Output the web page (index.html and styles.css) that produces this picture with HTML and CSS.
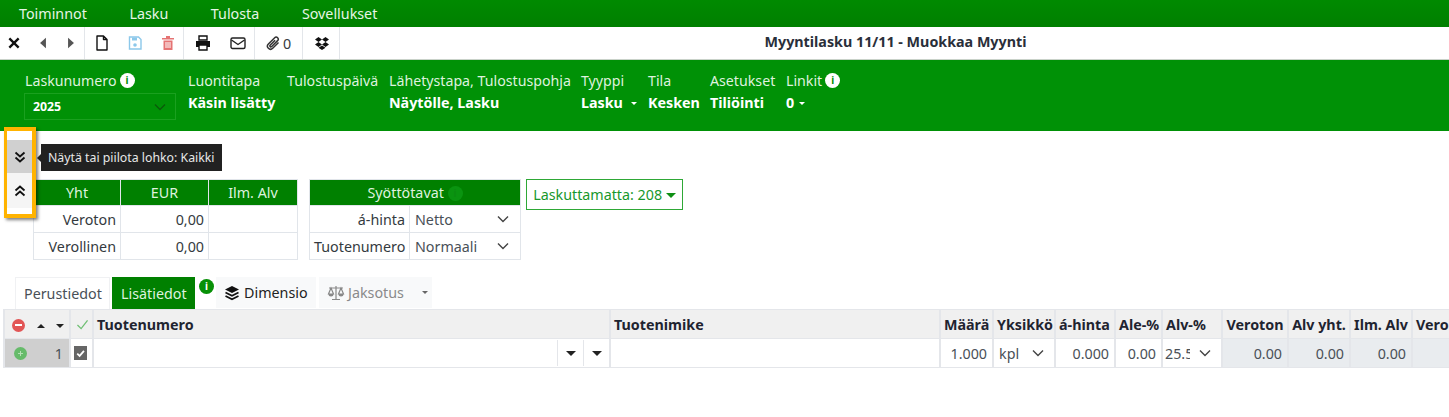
FILE: index.html
```html
<!DOCTYPE html>
<html lang="fi">
<head>
    <meta charset="UTF-8">
    <title>Myyntilasku 11/11 - Muokkaa Myynti</title>
    <link rel="stylesheet" href="styles.css">
</head>
<body>

<nav class="menubar">
    <a class="menu-item">Toiminnot</a>
    <a class="menu-item">Lasku</a>
    <a class="menu-item">Tulosta</a>
    <a class="menu-item">Sovellukset</a>
</nav>

<div class="toolbar">
    <div class="tool-group group-nav">
        <svg class="tool-icon" viewBox="0 0 12 12"><path d="M2 2l8 8M10 2l-8 8" stroke="#111" stroke-width="2" fill="none"/></svg>
        <svg class="tool-icon" viewBox="0 0 12 12"><path d="M8.500 1.500v9L3.500 6z" fill="#555"/></svg>
        <svg class="tool-icon" viewBox="0 0 12 12"><path d="M3.500 1.500v9l5-4.500z" fill="#555"/></svg>
    </div>
    <div class="tool-group group-file">
        <svg class="tool-icon big" viewBox="0 0 14 16"><path d="M2 1h6.500L12 4.500V15H2z M8.500 1v3.500H12" fill="none" stroke="#111" stroke-width="1.400" stroke-linejoin="round"/></svg>
        <svg class="tool-icon big" viewBox="0 0 14 16"><path d="M1.500 2h9L13 4.500V14H1.500z" fill="none" stroke="#8cc8ea" stroke-width="1.400"/><path d="M4 2.500h5v3H4z" fill="#8cc8ea"/><circle cx="7" cy="10" r="1.800" fill="#8cc8ea"/></svg>
        <svg class="tool-icon big" viewBox="0 0 14 16"><path d="M1 3h12v1.500H1z M5 1h4v2H5z" fill="#e57373"/><path d="M2.500 5.500h9V15h-9z" fill="#e57373"/><path d="M5 7v6M7 7v6M9 7v6" stroke="#fff" stroke-width="1"/></svg>
    </div>
    <div class="tool-group group-send">
        <svg class="tool-icon big" viewBox="0 0 16 16"><path d="M4 1h8v4H4z" fill="none" stroke="#111" stroke-width="1.400"/><path d="M1 6h14v6H1z" fill="#111"/><path d="M4 10h8v5H4z" fill="#fff" stroke="#111" stroke-width="1.400"/></svg>
        <svg class="tool-icon big" viewBox="0 0 16 16"><rect x="1" y="3" width="14" height="10.500" rx="1.500" fill="none" stroke="#222" stroke-width="1.400"/><path d="M1.500 5l6.500 4.500L14.500 5" fill="none" stroke="#222" stroke-width="1.400"/></svg>
    </div>
    <div class="tool-group group-clip">
        <svg class="tool-icon big" viewBox="0 0 16 16"><path d="M13.500 7.500l-5.800 5.800a3 3 0 0 1-4.300-4.300l6.300-6.300a2 2 0 0 1 2.900 2.900L6.500 11.700a1 1 0 0 1-1.400-1.400l5-5" fill="none" stroke="#333" stroke-width="1.500"/></svg>
        <span class="clip-count">0</span>
    </div>
    <div class="tool-group group-drop">
        <svg class="tool-icon big" viewBox="0 0 16 16"><path d="M4.500 2L1 4.500 4.500 7 1 9.500 4.500 12 8 9.500 11.500 12 15 9.500 11.500 7 15 4.500 11.500 2 8 4.500zM8 4.500L11.500 7 8 9.500 4.500 7z M4.500 12.800L8 10.500l3.500 2.300L8 15z" fill="#111" fill-rule="evenodd"/></svg>
    </div>
    <div class="doc-title">Myyntilasku 11/11 - Muokkaa Myynti</div>
</div>

<section class="head-panel">
    <div class="field field-number">
        <div class="field-label">Laskunumero <span class="info-dot">i</span></div>
        <div class="number-select">
            <span>2025</span>
            <svg class="chevron" viewBox="0 0 12 8"><path d="M1 1.500l5 5 5-5" fill="none" stroke="#0a5c0a" stroke-width="1.400"/></svg>
        </div>
    </div>
    <div class="field field-origin">
        <div class="field-label">Luontitapa</div>
        <div class="field-value">Käsin lisätty</div>
    </div>
    <div class="field field-print">
        <div class="field-label">Tulostuspäivä</div>
    </div>
    <div class="field field-send">
        <div class="field-label">Lähetystapa, Tulostuspohja</div>
        <div class="field-value">Näytölle, Lasku</div>
    </div>
    <div class="field field-type">
        <div class="field-label">Tyyppi</div>
        <div class="field-value">Lasku <span class="caret"></span></div>
    </div>
    <div class="field field-state">
        <div class="field-label">Tila</div>
        <div class="field-value">Kesken</div>
    </div>
    <div class="field field-settings">
        <div class="field-label">Asetukset</div>
        <div class="field-value">Tiliöinti</div>
    </div>
    <div class="field">
        <div class="field-label">Linkit <span class="info-dot">i</span></div>
        <div class="field-value">0 <span class="caret link-caret"></span></div>
    </div>
</section>

<div class="summary">
    <table class="mini-table totals">
        <colgroup><col class="t-first"><col class="t-second"><col></colgroup>
        <tr><th>Yht</th><th>EUR</th><th>Ilm. Alv</th></tr>
        <tr><td>Veroton</td><td>0,00</td><td></td></tr>
        <tr><td>Verollinen</td><td>0,00</td><td></td></tr>
    </table>
    <table class="mini-table modes">
        <colgroup><col class="m-label"><col></colgroup>
        <tr><th colspan="2">Syöttötavat <span class="info-dot dim">i</span></th></tr>
        <tr>
            <td>á-hinta</td>
            <td class="select-cell">Netto<svg class="chevron" viewBox="0 0 12 8"><path d="M1 1.500l5 5 5-5" fill="none" stroke="#444" stroke-width="1.400"/></svg></td>
        </tr>
        <tr>
            <td>Tuotenumero</td>
            <td class="select-cell">Normaali<svg class="chevron" viewBox="0 0 12 8"><path d="M1 1.500l5 5 5-5" fill="none" stroke="#444" stroke-width="1.400"/></svg></td>
        </tr>
    </table>
    <button class="unbilled">Laskuttamatta: 208 <span class="caret big-caret"></span></button>
</div>

<div class="tabs">
    <a class="tab tab-basic">Perustiedot</a>
    <a class="tab tab-extra">Lisätiedot</a>
    <span class="info-dot green">i</span>
    <a class="tab tab-dim">
        <svg class="tab-icon" viewBox="0 0 16 16"><path d="M8 1l7 3.500L8 8 1 4.500z" fill="#111"/><path d="M1.500 7.500L8 10.800l6.500-3.300M1.500 11L8 14.300 14.500 11" fill="none" stroke="#111" stroke-width="1.700"/></svg>
        Dimensio
    </a>
    <a class="tab tab-period">
        <svg class="tab-icon scale-icon" viewBox="0 0 18 16"><path d="M9 1v13M5 14.500h8M2 3h14M4 3L1.500 9h5zM14 3l-2.500 6h5z" fill="none" stroke="#888" stroke-width="1.200"/><path d="M1.500 9h5a2.500 2.500 0 0 1-5 0zM11.500 9h5a2.500 2.500 0 0 1-5 0z" fill="#888"/></svg>
        Jaksotus
        <span class="caret grey-caret"></span>
    </a>
</div>

<table class="rows">
    <colgroup>
        <col class="c-ctrl"><col class="c-check"><col class="c-code"><col class="c-name"><col class="c-qty">
        <col class="c-unit"><col class="c-price"><col class="c-disc"><col class="c-vat"><col class="c-net">
        <col class="c-sum"><col class="c-sum"><col class="c-sum">
    </colgroup>
    <tr>
        <th class="ctrl-head">
            <span class="round-btn red"></span>
            <span class="arrow up"></span>
            <span class="arrow down"></span>
        </th>
        <th class="check-head"><svg class="check-mark" viewBox="0 0 14 12"><path d="M1.500 6.500l4 4 7-9" fill="none" stroke="#6fbf73" stroke-width="1.400"/></svg></th>
        <th>Tuotenumero</th>
        <th>Tuotenimike</th>
        <th>Määrä</th>
        <th>Yksikkö</th>
        <th>á-hinta</th>
        <th>Ale-%</th>
        <th>Alv-%</th>
        <th class="center">Veroton</th>
        <th class="center">Alv yht.</th>
        <th class="center">Ilm. Alv</th>
        <th>Verollinen</th>
    </tr>
    <tr>
        <td class="ctrl-cell">
            <div class="ctrl-inner">
                <span class="round-btn green-btn"></span>
                <span class="row-no">1</span>
            </div>
        </td>
        <td class="check-cell"><span class="checkbox"><svg viewBox="0 0 12 12"><path d="M3 6.500l2.200 2.200 4-4.700" fill="none" stroke="#fff" stroke-width="1.600"/></svg></span></td>
        <td class="code-cell">
            <div class="code-drops">
                <span class="drop-btn"><span class="arrow down"></span></span>
                <span class="drop-btn"><span class="arrow down"></span></span>
            </div>
        </td>
        <td></td>
        <td class="num">1.000</td>
        <td class="select-cell">kpl<svg class="chevron" viewBox="0 0 12 8"><path d="M1 1.500l5 5 5-5" fill="none" stroke="#444" stroke-width="1.400"/></svg></td>
        <td class="num">0.000</td>
        <td class="num">0.00</td>
        <td class="select-cell vat-cell"><span class="vat-val">25.5</span><svg class="chevron" viewBox="0 0 12 8"><path d="M1 1.500l5 5 5-5" fill="none" stroke="#444" stroke-width="1.400"/></svg></td>
        <td class="num calc">0.00</td>
        <td class="num calc">0.00</td>
        <td class="num calc">0.00</td>
        <td class="calc"></td>
    </tr>
</table>

<!-- korostettu lohkopainike ja vihje ovat muun sisallon paalla -->
<div class="block-toggle">
    <div class="toggle-btn toggle-down">
        <svg viewBox="0 0 14 14"><path d="M2.500 2.500L7 6.500l4.500-4M2.500 7.500L7 11.500l4.500-4" fill="none" stroke="#111" stroke-width="1.800"/></svg>
    </div>
    <div class="toggle-btn toggle-up">
        <svg viewBox="0 0 14 14"><path d="M2.500 6.500L7 2.500l4.500 4M2.500 11.500L7 7.500l4.500 4" fill="none" stroke="#111" stroke-width="1.800"/></svg>
    </div>
</div>
<div class="tooltip">Näytä tai piilota lohko: Kaikki</div>

</body>
</html>
```

FILE: styles.css
```css
html, body {
    margin: 0;
    padding: 0;
    height: 417px;
    overflow: hidden;
}

body {
    font-family: "Noto Sans", "Open Sans", sans-serif;
    font-size: 14.3px;
    color: #343a40;
    background: #fff;
    position: relative;
}

/* ylavalikko */
.menubar {
    display: flex;
    height: 27px;
    align-items: center;
    padding-left: 19px;
    gap: 42.600px;
    background: linear-gradient(#008a00, #007f00);
}

.menu-item {
    color: #e6f5e6;
    line-height: 26px;
}

/* tyokalurivi */
.toolbar {
    display: flex;
    height: 32px;
    background: #fff;
    border-bottom: 1px solid #c9d2c9;
    position: relative;
}

.tool-group {
    display: flex;
    align-items: center;
    border-right: 1px solid #e3e6ea;
    box-sizing: border-box;
}

.tool-icon {
    width: 14px;
    height: 14px;
}

.tool-icon.big {
    width: 16px;
    height: 16px;
}

.group-nav {
    width: 85px;
    padding-left: 7px;
    gap: 14.500px;
}

.group-file {
    width: 99px;
    padding-left: 9px;
    gap: 17px;
}

.group-send {
    width: 71px;
    padding-left: 11px;
    gap: 19px;
}

.group-clip {
    width: 48px;
    padding-left: 10px;
    gap: 2px;
}

.group-drop {
    width: 37px;
    padding-left: 11px;
}

.doc-title {
    position: absolute;
    left: 342px;
    right: 0;
    top: 0;
    line-height: 29px;
    text-align: center;
    font-weight: bold;
    color: #2a2f3a;
}

/* vihrea otsikkopaneeli */
.head-panel {
    display: flex;
    height: 71px;
    box-sizing: border-box;
    padding: 10px 0 0 25px;
    background: #009106;
    color: #fff;
}

.field-label {
    color: #dff2df;
    font-size: 14.200px;
    line-height: 21px;
    white-space: nowrap;
    display: flex;
    align-items: center;
    gap: 3px;
}

.field-value {
    font-weight: bold;
    line-height: 22px;
    margin-top: 1px;
    white-space: nowrap;
}

.field-number { width: 163px; }
.field-origin { width: 99px; }
.field-print { width: 102px; }
.field-send { width: 192px; }
.field-type { width: 67px; }
.field-state { width: 62px; }
.field-settings { width: 76px; }

.info-dot {
    display: inline-block;
    width: 15px;
    height: 15px;
    border-radius: 50%;
    background: #fff;
    color: #009106;
    font-size: 10px;
    font-weight: bold;
    line-height: 15px;
    text-align: center;
}

.info-dot.dim {
    background: #0a9410;
    color: #0a8c10;
    vertical-align: 1px;
}

.info-dot.green {
    background: #079007;
    color: #fff;
    margin: 2px 2px 0 4px;
}

.number-select {
    display: flex;
    align-items: center;
    justify-content: space-between;
    width: 152px;
    height: 27px;
    box-sizing: border-box;
    margin-top: 2px;
    margin-left: -1px;
    padding: 0 9px 0 8px;
    border: 1px solid #1aa01f;
    font-size: 12.300px;
    font-weight: bold;
}

.chevron {
    width: 12px;
    height: 8px;
    flex: none;
}

.caret {
    display: inline-block;
    width: 0;
    height: 0;
    margin-left: 4px;
    vertical-align: 3px;
    border-left: 3px solid transparent;
    border-right: 3px solid transparent;
    border-top: 3px solid #fff;
}

.link-caret {
    margin-left: 1px;
}

/* yhteenvetotaulukot */
.summary {
    display: flex;
    align-items: flex-start;
    height: 129px;
    box-sizing: border-box;
    padding: 48px 0 0 33px;
}

.mini-table {
    border-collapse: collapse;
    table-layout: fixed;
    border: 1px solid #e1e5ea;
}

.mini-table th {
    background: #008000;
    color: #dff2df;
    font-weight: normal;
    height: 25px;
    padding: 0;
    text-align: center;
    border: 1px solid #e1e5ea;
    border-top: 0;
    border-bottom: 0;
}

.mini-table td {
    height: 27px;
    padding: 0 4px;
    text-align: right;
    border: 1px solid #e1e5ea;
    box-sizing: border-box;
    white-space: nowrap;
}

.totals {
    width: 265px;
}

.t-first { width: 87px; }
.t-second { width: 88px; }

.modes {
    width: 212px;
    margin-left: 11px;
}

.m-label { width: 100px; }

.mini-table td.select-cell {
    text-align: left;
    padding-left: 5px;
}

.select-cell {
    position: relative;
}

.select-cell .chevron {
    position: absolute;
    right: 11px;
    top: 50%;
    margin-top: -4px;
}

.modes .select-cell {
    color: #495057;
}

.unbilled {
    margin: 0 0 0 5px;
    width: 157px;
    height: 31px;
    padding: 0;
    background: #fff;
    border: 1px solid #2ea836;
    color: #17982b;
    font-family: inherit;
    font-size: inherit;
    white-space: nowrap;
}

.big-caret {
    margin-left: 0;
    vertical-align: 2px;
    border-left-width: 5px;
    border-right-width: 5px;
    border-top: 5px solid #0d8f13;
}

/* valilehdet */
.tabs {
    display: flex;
    align-items: flex-start;
    padding: 17px 0 0 15px;
    height: 49px;
    box-sizing: border-box;
}

.tab {
    display: flex;
    align-items: center;
    height: 32px;
    box-sizing: border-box;
    white-space: nowrap;
}

.tab-basic {
    width: 95px;
    padding-left: 8px;
    color: #495057;
    border: 1px solid #f0f1f3;
    border-bottom: 0;
    margin-right: 2px;
}

.tab-extra {
    width: 83px;
    padding-left: 9px;
    background: #008000;
    color: #dff2df;
}

.tab-dim {
    width: 100px;
    height: 31px;
    margin-right: 3px;
    padding-left: 8px;
    gap: 4px;
    background: #f8f9fa;
    color: #222;
}

.tab-period {
    width: 113px;
    height: 31px;
    padding-left: 8px;
    gap: 3px;
    background: #f8f9fa;
    color: #8a8a8a;
}

.tab-icon {
    width: 16px;
    height: 16px;
}

.scale-icon {
    width: 18px;
}

.grey-caret {
    margin-left: 15px;
    border-top-color: #666;
}

/* rivitaulukko */
.rows {
    margin-left: 3px;
    width: 1471px;
    border-collapse: collapse;
    table-layout: fixed;
}

.c-ctrl { width: 66px; }
.c-check { width: 23px; }
.c-code { width: 517px; }
.c-name { width: 330px; }
.c-qty { width: 53px; }
.c-unit { width: 62px; }
.c-price { width: 60px; }
.c-disc { width: 47px; }
.c-vat { width: 60px; }
.c-net { width: 66px; }
.c-sum { width: 62px; }

.rows th {
    height: 28px;
    padding: 0 3px;
    background: #f0f0f0;
    color: #1f2430;
    font-weight: bold;
    text-align: left;
    border: 2px solid #e4e6ea;
    border-width: 1px 2px;
    white-space: nowrap;
    overflow: hidden;
}

.rows th.center {
    text-align: center;
}

.rows td {
    height: 29px;
    padding: 0 5px;
    border: 2px solid #e4e6ea;
    border-width: 1px 2px;
    box-sizing: border-box;
    white-space: nowrap;
}

.rows td.num {
    text-align: right;
    color: #495057;
}

.rows td.calc {
    background: #e9ecef;
}

.rows .ctrl-head {
    padding: 0 0 0 7px;
}

.rows .check-head {
    padding: 0 0 0 2px;
    text-align: center;
}

.check-mark {
    width: 13px;
    height: 11px;
}

.round-btn {
    display: inline-block;
    width: 13px;
    height: 13px;
    border-radius: 50%;
    position: relative;
    vertical-align: middle;
}

.round-btn.red {
    background: #e25555;
}

.round-btn.red::after {
    content: "";
    position: absolute;
    left: 3px;
    right: 3px;
    top: 5px;
    height: 2px;
    background: #fff;
}

.green-btn {
    background: #66bb6a;
}

.green-btn::before,
.green-btn::after {
    content: "";
    position: absolute;
    background: #b5e0b5;
}

.green-btn::before {
    left: 4px;
    top: 6px;
    width: 5px;
    height: 1px;
}

.green-btn::after {
    left: 6px;
    top: 4px;
    width: 1px;
    height: 5px;
}

.arrow {
    display: inline-block;
    width: 0;
    height: 0;
    border-left: 4px solid transparent;
    border-right: 4px solid transparent;
    vertical-align: middle;
}

.arrow.up {
    margin-left: 8px;
    border-bottom: 4px solid #222;
}

.arrow.down {
    margin-left: 8px;
    border-top: 4px solid #222;
}

.rows .ctrl-cell {
    padding: 0 6px 0 9px;
    background: #cfcfcf;
}

.ctrl-inner {
    display: flex;
    align-items: center;
    justify-content: space-between;
}

.row-no {
    color: #495057;
}

.rows .check-cell {
    padding: 0 0 0 3px;
}

.checkbox {
    display: block;
    width: 13px;
    height: 14px;
    background: #666;
}

.checkbox svg {
    display: block;
    width: 13px;
    height: 14px;
}

.rows .code-cell {
    padding: 0;
}

.code-drops {
    display: flex;
    justify-content: flex-end;
    height: 26px;
}

.drop-btn {
    display: flex;
    align-items: center;
    justify-content: center;
    width: 25px;
    border-left: 1px solid #e4e6ea;
}

.drop-btn .arrow.down {
    margin-left: 0;
    border-left-width: 5px;
    border-right-width: 5px;
    border-top-width: 5px;
}

.rows td.select-cell {
    padding: 0 0 0 5px;
    color: #495057;
}

.rows td.vat-cell {
    padding-left: 2px;
}

.vat-val {
    display: inline-block;
    width: 25px;
    overflow: hidden;
    vertical-align: bottom;
}

.rows .select-cell .chevron {
    right: 10px;
}

/* lohkon nayta/piilota -painikkeet */
.block-toggle {
    position: absolute;
    left: 4px;
    top: 127px;
    width: 25px;
    height: 74px;
    padding-top: 9px;
    border: 4px solid #ffb300;
    border-left-width: 3px;
    background: #fff;
    box-shadow: 2px 2px 3px rgba(0, 0, 0, 0.5);
}

.toggle-btn {
    display: flex;
    align-items: center;
    justify-content: center;
    height: 33px;
}

.toggle-btn svg {
    width: 14px;
    height: 14px;
}

.toggle-down {
    background: #d0d0d0;
}

.toggle-up {
    height: 35px;
    background: #f5f5f5;
}

.tooltip {
    position: absolute;
    left: 41px;
    top: 144px;
    width: 181px;
    height: 27px;
    line-height: 27px;
    box-sizing: border-box;
    padding-left: 7px;
    background: #212121;
    color: #e8e8e8;
    font-size: 12.300px;
    white-space: nowrap;
}

.tooltip::before {
    content: "";
    position: absolute;
    left: -4px;
    top: 10px;
    border-top: 4px solid transparent;
    border-bottom: 4px solid transparent;
    border-right: 4px solid #212121;
}
```
